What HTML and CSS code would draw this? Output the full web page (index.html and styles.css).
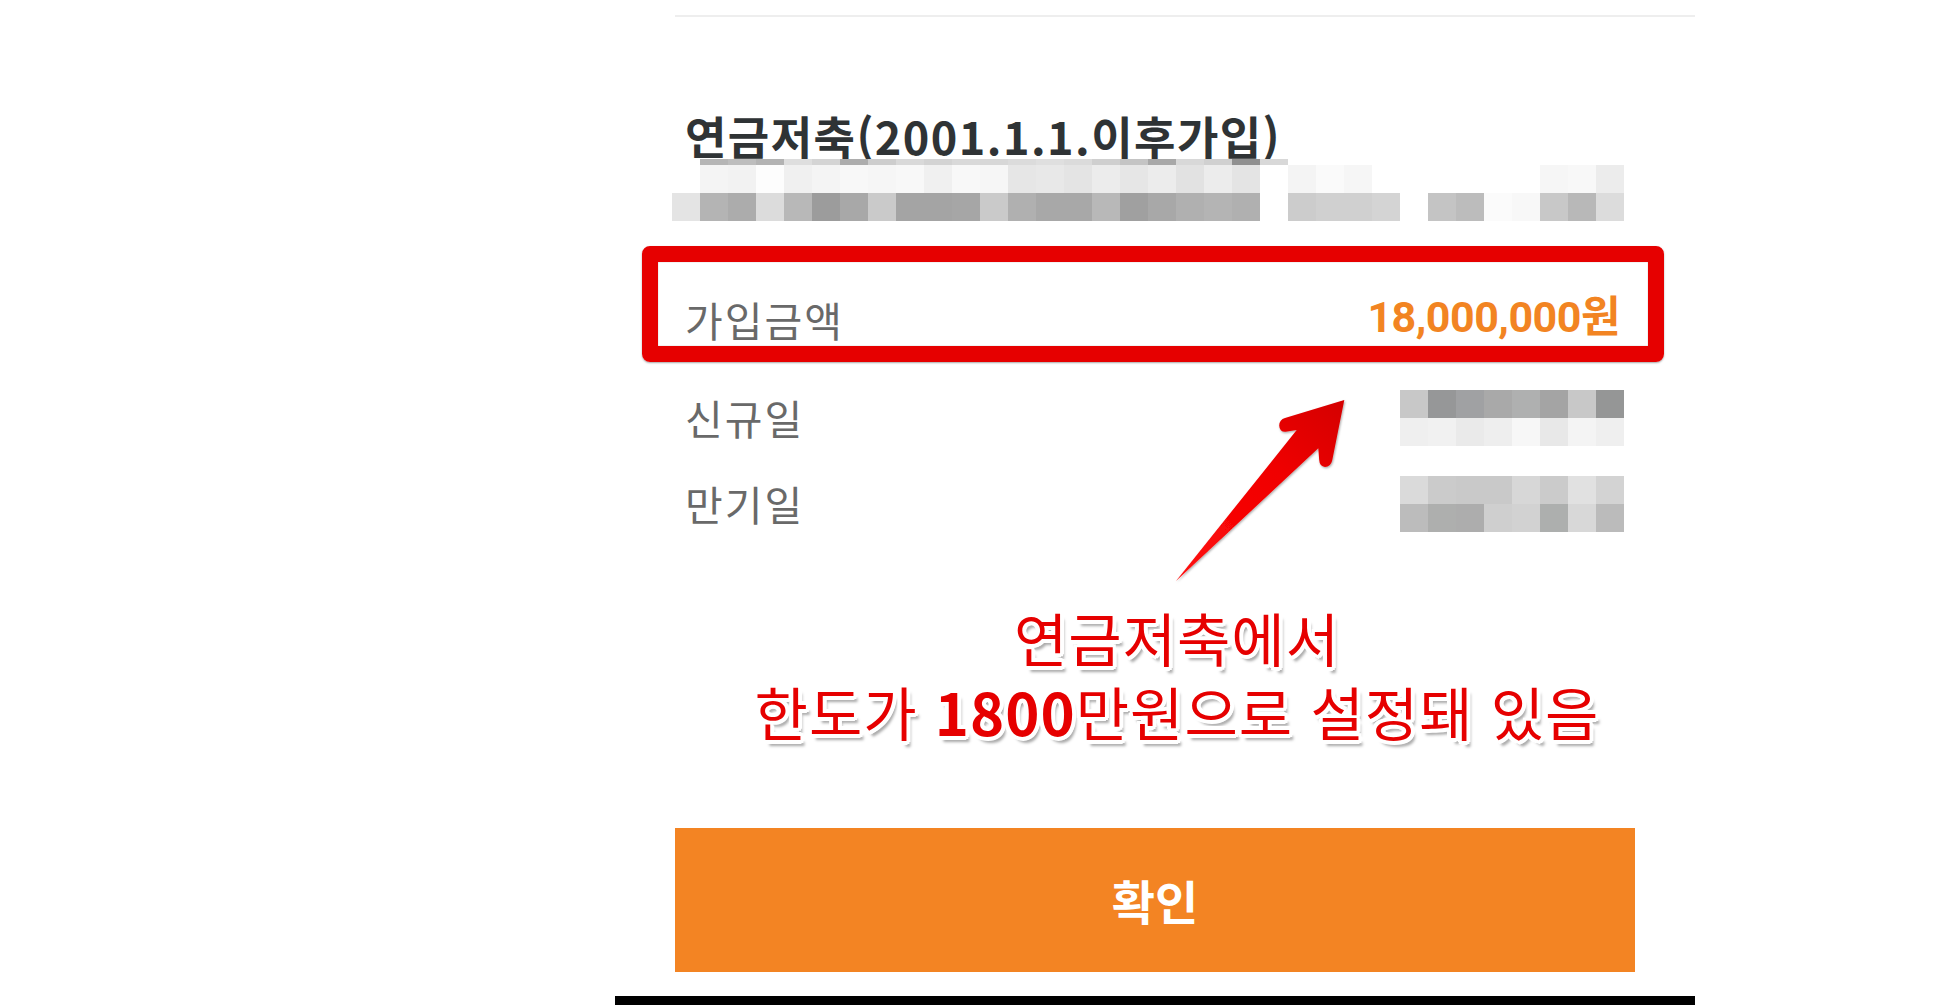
FILE: index.html
```html
<!DOCTYPE html>
<html lang="ko">
<head>
<meta charset="utf-8">
<title>연금저축</title>
<link rel="stylesheet" href="styles.css">
</head>
<body>
<div class="panel">
  <div class="top-rule"></div>
  <section class="info">
    <h1 class="title">연금저축(2001.1.1.이후가입)</h1>
    <svg class="mosaic-desc" width="952" height="62" viewBox="0 0 952 62" aria-hidden="true">
      <g class="r0">
        <rect x="28" y="0" width="28" height="6" fill="#b5b5b5"/>
        <rect x="56" y="0" width="28" height="6" fill="#bdbdbd"/>
        <rect x="84" y="0" width="28" height="6" fill="#b3b3b3"/>
        <rect x="112" y="0" width="28" height="6" fill="#dedede"/>
        <rect x="140" y="0" width="28" height="6" fill="#d4d4d4"/>
        <rect x="168" y="0" width="28" height="6" fill="#adadad"/>
        <rect x="196" y="0" width="28" height="6" fill="#cdcdcd"/>
        <rect x="224" y="0" width="28" height="6" fill="#d9d9d9"/>
        <rect x="252" y="0" width="28" height="6" fill="#d3d3d3"/>
        <rect x="280" y="0" width="28" height="6" fill="#d9d9d9"/>
        <rect x="308" y="0" width="28" height="6" fill="#d7d7d7"/>
        <rect x="336" y="0" width="28" height="6" fill="#dbdbdb"/>
        <rect x="364" y="0" width="28" height="6" fill="#dfdfdf"/>
        <rect x="392" y="0" width="28" height="6" fill="#dbdbdb"/>
        <rect x="420" y="0" width="28" height="6" fill="#cfcfcf"/>
        <rect x="448" y="0" width="28" height="6" fill="#c4c4c4"/>
        <rect x="476" y="0" width="28" height="6" fill="#a8a8a8"/>
        <rect x="504" y="0" width="28" height="6" fill="#d8d8d8"/>
        <rect x="532" y="0" width="28" height="6" fill="#d0d0d0"/>
        <rect x="560" y="0" width="28" height="6" fill="#909090"/>
        <rect x="588" y="0" width="28" height="6" fill="#d8d8d8"/>
      </g>
      <g class="r1">
        <rect x="28" y="6" width="28" height="28" fill="#f4f4f4"/>
        <rect x="56" y="6" width="28" height="28" fill="#f2f2f2"/>
        <rect x="84" y="6" width="28" height="28" fill="#fdfdfd"/>
        <rect x="112" y="6" width="28" height="28" fill="#f0f0f0"/>
        <rect x="140" y="6" width="28" height="28" fill="#f4f4f4"/>
        <rect x="168" y="6" width="28" height="28" fill="#f8f8f8"/>
        <rect x="196" y="6" width="28" height="28" fill="#f6f6f6"/>
        <rect x="224" y="6" width="28" height="28" fill="#f8f8f8"/>
        <rect x="252" y="6" width="28" height="28" fill="#f0f0f0"/>
        <rect x="280" y="6" width="28" height="28" fill="#f8f8f8"/>
        <rect x="308" y="6" width="28" height="28" fill="#f6f6f6"/>
        <rect x="336" y="6" width="28" height="28" fill="#e6e6e6"/>
        <rect x="364" y="6" width="28" height="28" fill="#e8e8e8"/>
        <rect x="392" y="6" width="28" height="28" fill="#e4e4e4"/>
        <rect x="420" y="6" width="28" height="28" fill="#ececec"/>
        <rect x="448" y="6" width="28" height="28" fill="#e6e6e6"/>
        <rect x="476" y="6" width="28" height="28" fill="#ececec"/>
        <rect x="504" y="6" width="28" height="28" fill="#e2e2e2"/>
        <rect x="532" y="6" width="28" height="28" fill="#ececec"/>
        <rect x="560" y="6" width="28" height="28" fill="#e4e4e4"/>
        <rect x="616" y="6" width="28" height="28" fill="#f4f4f4"/>
        <rect x="644" y="6" width="28" height="28" fill="#fafafa"/>
        <rect x="672" y="6" width="28" height="28" fill="#f6f6f6"/>
        <rect x="868" y="6" width="28" height="28" fill="#f6f6f6"/>
        <rect x="896" y="6" width="28" height="28" fill="#f8f8f8"/>
        <rect x="924" y="6" width="28" height="28" fill="#ececec"/>
      </g>
      <g class="r2">
        <rect x="0" y="34" width="28" height="28" fill="#e4e4e4"/>
        <rect x="28" y="34" width="28" height="28" fill="#b4b4b4"/>
        <rect x="56" y="34" width="28" height="28" fill="#acacac"/>
        <rect x="84" y="34" width="28" height="28" fill="#dcdcdc"/>
        <rect x="112" y="34" width="28" height="28" fill="#b8b8b8"/>
        <rect x="140" y="34" width="28" height="28" fill="#9c9c9c"/>
        <rect x="168" y="34" width="28" height="28" fill="#a8a8a8"/>
        <rect x="196" y="34" width="28" height="28" fill="#cacaca"/>
        <rect x="224" y="34" width="28" height="28" fill="#a4a4a4"/>
        <rect x="252" y="34" width="28" height="28" fill="#a4a4a4"/>
        <rect x="280" y="34" width="28" height="28" fill="#a6a6a6"/>
        <rect x="308" y="34" width="28" height="28" fill="#cacaca"/>
        <rect x="336" y="34" width="28" height="28" fill="#b0b0b0"/>
        <rect x="364" y="34" width="28" height="28" fill="#a8a8a8"/>
        <rect x="392" y="34" width="28" height="28" fill="#a8a8a8"/>
        <rect x="420" y="34" width="28" height="28" fill="#b8b8b8"/>
        <rect x="448" y="34" width="28" height="28" fill="#a0a0a0"/>
        <rect x="476" y="34" width="28" height="28" fill="#a8a8a8"/>
        <rect x="504" y="34" width="28" height="28" fill="#b0b0b0"/>
        <rect x="532" y="34" width="28" height="28" fill="#b4b4b4"/>
        <rect x="560" y="34" width="28" height="28" fill="#b0b0b0"/>
        <rect x="616" y="34" width="28" height="28" fill="#cccccc"/>
        <rect x="644" y="34" width="28" height="28" fill="#d0d0d0"/>
        <rect x="672" y="34" width="28" height="28" fill="#d0d0d0"/>
        <rect x="700" y="34" width="28" height="28" fill="#d4d4d4"/>
        <rect x="756" y="34" width="28" height="28" fill="#c4c4c4"/>
        <rect x="784" y="34" width="28" height="28" fill="#bcbcbc"/>
        <rect x="812" y="34" width="28" height="28" fill="#fbfbfb"/>
        <rect x="840" y="34" width="28" height="28" fill="#f8f8f8"/>
        <rect x="868" y="34" width="28" height="28" fill="#c8c8c8"/>
        <rect x="896" y="34" width="28" height="28" fill="#b8b8b8"/>
        <rect x="924" y="34" width="28" height="28" fill="#dcdcdc"/>
      </g>
    </svg>

    <div class="rows">
      <div class="row row-amount">
        <span class="label">가입금액</span>
        <span class="amount">18,000,000원</span>
      </div>
      <div class="row">
        <span class="label">신규일</span>
        <svg class="mosaic-val" width="224" height="56" viewBox="0 0 224 56" aria-hidden="true">
          <rect x="0" y="0" width="28" height="28" fill="#c8c8c8"/>
          <rect x="28" y="0" width="28" height="28" fill="#969798"/>
          <rect x="56" y="0" width="28" height="28" fill="#a0a1a3"/>
          <rect x="84" y="0" width="28" height="28" fill="#a9a9a9"/>
          <rect x="112" y="0" width="28" height="28" fill="#afb0b0"/>
          <rect x="140" y="0" width="28" height="28" fill="#a4a4a4"/>
          <rect x="168" y="0" width="28" height="28" fill="#c8c8c8"/>
          <rect x="196" y="0" width="28" height="28" fill="#959696"/>
          <rect x="0" y="28" width="28" height="28" fill="#efefef"/>
          <rect x="28" y="28" width="28" height="28" fill="#f1f1f1"/>
          <rect x="56" y="28" width="28" height="28" fill="#eaeaea"/>
          <rect x="84" y="28" width="28" height="28" fill="#eeeeee"/>
          <rect x="112" y="28" width="28" height="28" fill="#f7f7f7"/>
          <rect x="140" y="28" width="28" height="28" fill="#e8e8e8"/>
          <rect x="168" y="28" width="28" height="28" fill="#f4f4f4"/>
          <rect x="196" y="28" width="28" height="28" fill="#efefef"/>
        </svg>
      </div>
      <div class="row">
        <span class="label">만기일</span>
        <svg class="mosaic-val" width="224" height="56" viewBox="0 0 224 56" aria-hidden="true">
          <rect x="0" y="0" width="28" height="28" fill="#dadada"/>
          <rect x="28" y="0" width="28" height="28" fill="#cbcbcb"/>
          <rect x="56" y="0" width="28" height="28" fill="#c9c9c9"/>
          <rect x="84" y="0" width="28" height="28" fill="#c9c9c9"/>
          <rect x="112" y="0" width="28" height="28" fill="#d7d7d7"/>
          <rect x="140" y="0" width="28" height="28" fill="#cbcbcb"/>
          <rect x="168" y="0" width="28" height="28" fill="#e1e1e1"/>
          <rect x="196" y="0" width="28" height="28" fill="#d3d3d3"/>
          <rect x="0" y="28" width="28" height="28" fill="#bcbcbc"/>
          <rect x="28" y="28" width="28" height="28" fill="#aeafae"/>
          <rect x="56" y="28" width="28" height="28" fill="#adadad"/>
          <rect x="84" y="28" width="28" height="28" fill="#cfcfcf"/>
          <rect x="112" y="28" width="28" height="28" fill="#d2d2d2"/>
          <rect x="140" y="28" width="28" height="28" fill="#adafae"/>
          <rect x="168" y="28" width="28" height="28" fill="#d8d8d8"/>
          <rect x="196" y="28" width="28" height="28" fill="#bbbbbb"/>
        </svg>
      </div>
    </div>
  </section>

  <button class="confirm" type="button">확인</button>
  <div class="bottom-bar"></div>

  <div class="highlight-box"></div>

  <svg class="arrow" width="220" height="220" viewBox="1150 380 220 220" aria-hidden="true">
    <defs>
      <linearGradient id="arrowGrad" x1="1180" y1="580" x2="1344" y2="400" gradientUnits="userSpaceOnUse">
        <stop offset="0" stop-color="#ff0d0d"/>
        <stop offset="0.6" stop-color="#f00000"/>
        <stop offset="1" stop-color="#d40000"/>
      </linearGradient>
      <filter id="arrowShadow" x="-10%" y="-10%" width="130%" height="130%">
        <feDropShadow dx="0.8" dy="1.2" stdDeviation="0.8" flood-color="#000" flood-opacity="0.35"/>
      </filter>
    </defs>
    <path d="M1176,581 L1296.7,430 L1285.5,431.8 Q1279.5,432 1279.2,425.5 Q1279.4,419.6 1285,418 L1344.3,400 L1332.2,460.5 Q1330.6,467 1325,467 Q1319.6,466.4 1319.2,460 L1318.3,448.3 Z" fill="url(#arrowGrad)" filter="url(#arrowShadow)"/>
  </svg>

  <div class="callout">
    <p class="callout-line">연금저축에서</p>
    <p class="callout-line">한도가 <b class="callout-num">1800</b>만원으로 설정돼 있음</p>
  </div>
</div>
</body>
</html>
```

FILE: styles.css
```css
html, body {
  margin: 0;
  padding: 0;
  background: #ffffff;
  overflow: hidden;
}

body {
  font-family: "Noto Sans CJK KR", "Noto Sans", sans-serif;
  height: 1005px;
}

.panel {
  position: relative;
  margin-left: 615px;
  width: 1080px;
  padding-top: 15px;
}

.top-rule {
  margin-left: 60px;
  height: 2px;
  background: #eeeeee;
}

.info {
  margin: 0 60px;
  padding: 0 11px 0 10px;
}

.title {
  margin: 96px 0 0 0;
  font-size: 45px;
  line-height: 46px;
  font-weight: 700;
  color: #2f3335;
  letter-spacing: 1.45px;
  white-space: nowrap;
}

.mosaic-desc {
  display: block;
  margin: 0 0 0 -13px;
}

.rows {
  margin-top: 56px;
  display: flex;
  flex-direction: column;
}

.row {
  height: 86px;
  display: flex;
  align-items: center;
  justify-content: space-between;
}

.row-amount {
  margin-bottom: 12px;
}

.label {
  font-size: 41px;
  line-height: 1;
  font-weight: 400;
  letter-spacing: 2px;
  color: #696969;
  margin-bottom: 2px;
}

.amount {
  font-family: Roboto, "Noto Sans CJK KR", sans-serif;
  font-size: 43px;
  line-height: 1;
  font-weight: 700;
  color: #f28422;
  padding-right: 4px;
  margin-bottom: 6px;
  letter-spacing: -0.5px;
}

.mosaic-val {
  display: block;
}

.confirm {
  display: block;
  margin: 281px 0 0 60px;
  width: 960px;
  height: 144px;
  border: 0;
  padding: 0;
  background: #f38423;
  color: #ffffff;
  font-family: "Noto Sans CJK KR", sans-serif;
  font-size: 47px;
  font-weight: 700;
  line-height: 144px;
}

.bottom-bar {
  margin-top: 24px;
  height: 20px;
  background: #000000;
}

.highlight-box {
  position: absolute;
  left: 27px;
  top: 246px;
  width: 1022px;
  height: 116px;
  box-sizing: border-box;
  border: 16px solid #e60000;
  border-radius: 8px;
  box-shadow: 0 1px 2px rgba(0, 0, 0, 0.35), inset 0 0 1px rgba(0, 0, 0, 0.5);
}

.arrow {
  position: absolute;
  left: 535px;
  top: 380px;
}

.callout {
  position: absolute;
  left: 62px;
  top: 600px;
  width: 1000px;
  text-align: center;
}

.callout-line {
  margin: 0;
  font-size: 58px;
  line-height: 74px;
  font-weight: 400;
  letter-spacing: 1px;
  color: #e60000;
  white-space: nowrap;
  text-shadow:
    3px 0 0 #fff, -3px 0 0 #fff, 0 3px 0 #fff, 0 -3px 0 #fff,
    2px 2px 0 #fff, -2px 2px 0 #fff, 2px -2px 0 #fff, -2px -2px 0 #fff,
    4px 1px 0 #fff, -4px 1px 0 #fff, 1px 4px 0 #fff, 1px -4px 0 #fff,
    3px 3px 0 #fff, -3px 3px 0 #fff, 3px -3px 0 #fff, -3px -3px 0 #fff,
    4px 6px 3px rgba(0, 0, 0, 0.35);
}

.callout-num {
  font-weight: 700;
}
```
